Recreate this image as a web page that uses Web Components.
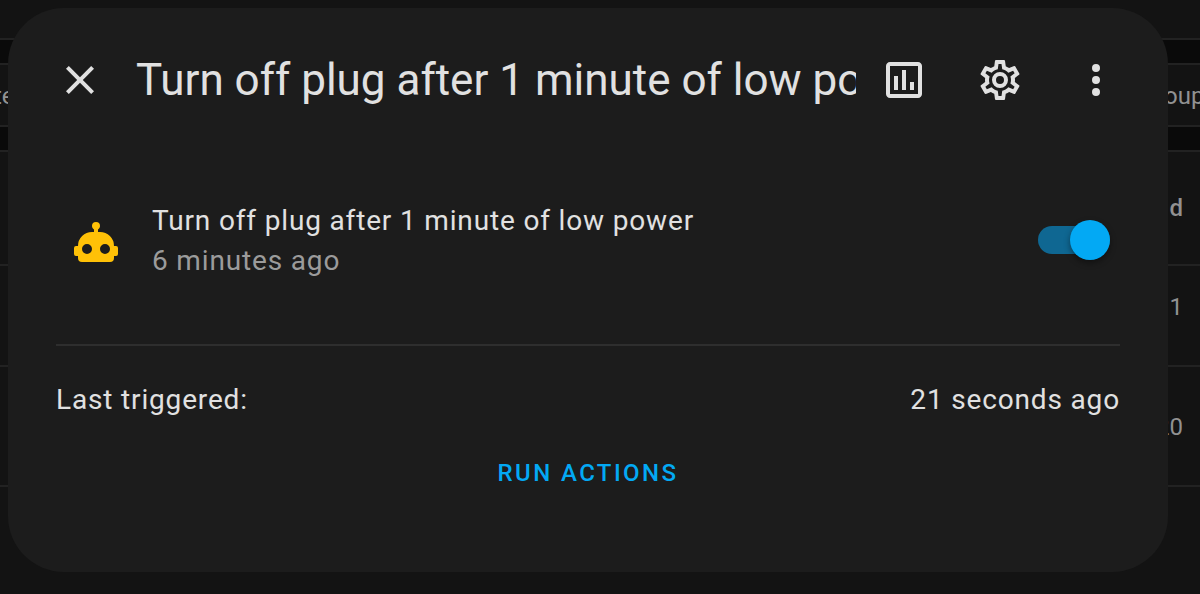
<!DOCTYPE html>
<html lang="en">
<head>
<meta charset="utf-8">
<meta name="viewport" content="width=device-width, initial-scale=1">
<title>Turn off plug after 1 minute of low power</title>
<style>
  html, body { margin: 0; min-height: 100%; background: #131313; }
  body { font-family: Roboto, "Liberation Sans", sans-serif; color: #e1e1e1; }
</style>
</head>
<body>
<automation-page>
  <automation-list slot="background"></automation-list>
  <more-info-dialog heading="Turn off plug after 1 minute of low power">
    <entity-row name="Turn off plug after 1 minute of low power" changed="6 minutes ago"></entity-row>
    <attribute-row label="Last triggered:" value="21 seconds ago"></attribute-row>
    <action-button>RUN ACTIONS</action-button>
  </more-info-dialog>
</automation-page>

<script>
const ICONS = {
  close: 'M19,6.41L17.59,5L12,10.59L6.41,5L5,6.41L10.59,12L5,17.59L6.41,19L12,13.41L17.59,19L19,17.59L13.41,12L19,6.41Z',
  chart: 'M9 17H7V10H9V17M13 17H11V7H13V17M17 17H15V13H17V17M19 19H5V5H19V19.1M19 3H5C3.9 3 3 3.9 3 5V19C3 20.1 3.9 21 5 21H19C20.1 21 21 20.1 21 19V5C21 3.9 20.1 3 19 3Z',
  cog: 'M12,8A4,4 0 0,1 16,12A4,4 0 0,1 12,16A4,4 0 0,1 8,12A4,4 0 0,1 12,8M12,10A2,2 0 0,0 10,12A2,2 0 0,0 12,14A2,2 0 0,0 14,12A2,2 0 0,0 12,10M10,22C9.75,22 9.54,21.82 9.5,21.58L9.13,18.93C8.5,18.68 7.96,18.34 7.44,17.94L4.95,18.95C4.73,19.03 4.46,18.95 4.34,18.73L2.34,15.27C2.21,15.05 2.27,14.78 2.46,14.63L4.57,12.97L4.5,12L4.57,11L2.46,9.37C2.27,9.22 2.21,8.95 2.34,8.73L4.34,5.27C4.46,5.05 4.73,4.96 4.95,5.05L7.44,6.05C7.96,5.66 8.5,5.32 9.13,5.07L9.5,2.42C9.54,2.18 9.75,2 10,2H14C14.25,2 14.46,2.18 14.5,2.42L14.87,5.07C15.5,5.32 16.04,5.66 16.56,6.05L19.05,5.05C19.27,4.96 19.54,5.05 19.66,5.27L21.66,8.73C21.79,8.95 21.73,9.22 21.54,9.37L19.43,11L19.5,12L19.43,13L21.54,14.63C21.73,14.78 21.79,15.05 21.66,15.27L19.66,18.73C19.54,18.95 19.27,19.04 19.05,18.95L16.56,17.95C16.04,18.34 15.5,18.68 14.87,18.93L14.5,21.58C14.46,21.82 14.25,22 14,22H10M11.25,4L10.88,6.61C9.68,6.86 8.62,7.5 7.85,8.39L5.44,7.35L4.69,8.65L6.8,10.2C6.4,11.37 6.4,12.64 6.8,13.8L4.68,15.36L5.43,16.66L7.86,15.62C8.63,16.5 9.68,17.14 10.87,17.38L11.24,20H12.76L13.13,17.39C14.32,17.14 15.37,16.5 16.14,15.62L18.57,16.66L19.32,15.36L17.2,13.81C17.6,12.64 17.6,11.37 17.2,10.2L19.31,8.65L18.56,7.35L16.15,8.39C15.38,7.5 14.32,6.86 13.12,6.62L12.75,4H11.25Z',
  dots: 'M12,16A2,2 0 0,1 14,18A2,2 0 0,1 12,20A2,2 0 0,1 10,18A2,2 0 0,1 12,16M12,10A2,2 0 0,1 14,12A2,2 0 0,1 12,14A2,2 0 0,1 10,12A2,2 0 0,1 12,10M12,4A2,2 0 0,1 14,6A2,2 0 0,1 12,8A2,2 0 0,1 10,6A2,2 0 0,1 12,4Z',
  robot: 'M12,2A2,2 0 0,1 14,4C14,4.74 13.6,5.39 13,5.73V7H14A7,7 0 0,1 21,14H22A1,1 0 0,1 23,15V18A1,1 0 0,1 22,19H21V20A2,2 0 0,1 19,22H5A2,2 0 0,1 3,20V19H2A1,1 0 0,1 1,18V15A1,1 0 0,1 2,14H3A7,7 0 0,1 10,7H11V5.73C10.4,5.39 10,4.74 10,4A2,2 0 0,1 12,2M7.5,13A2.5,2.5 0 0,0 5,15.5A2.5,2.5 0 0,0 7.5,18A2.5,2.5 0 0,0 10,15.5A2.5,2.5 0 0,0 7.5,13M16.5,13A2.5,2.5 0 0,0 14,15.5A2.5,2.5 0 0,0 16.5,18A2.5,2.5 0 0,0 19,15.5A2.5,2.5 0 0,0 16.5,13Z'
};

class BaseElement extends HTMLElement {
  connectedCallback() {
    if (!this.shadowRoot) this.attachShadow({ mode: 'open' }).innerHTML = this.render();
  }
}

customElements.define('svg-icon', class extends BaseElement {
  render() {
    return `<style>
      :host { display: block; width: 48px; height: 48px; }
      svg { display: block; width: 100%; height: 100%; fill: currentColor; }
    </style>
    <svg viewBox="0 0 24 24" aria-hidden="true"><path d="${ICONS[this.getAttribute('name')]}"/></svg>`;
  }
});

customElements.define('icon-button', class extends BaseElement {
  render() {
    return `<style>
      :host { display: block; flex: none; }
      button { display: block; padding: 24px; border: 0; border-radius: 50%; background: none; color: inherit; cursor: pointer; }
    </style>
    <button type="button" aria-label="${this.getAttribute('label')}"><svg-icon name="${this.getAttribute('icon')}"></svg-icon></button>`;
  }
});

/* The page stacks the dialog over the list in one grid cell. */
customElements.define('automation-page', class extends BaseElement {
  render() {
    return `<style>
      :host { display: grid; grid-template-columns: minmax(0, 1fr); min-height: 100vh; overflow: hidden; }
      slot { display: contents; }
      ::slotted(*) { grid-area: 1 / 1; }
    </style>
    <slot name="background"></slot><slot></slot>`;
  }
});

/* Dimmed list behind the dialog. */
customElements.define('automation-list', class extends BaseElement {
  render() {
    return `<style>
      :host { display: block; overflow: hidden; font-size: 24px; line-height: 32px; color: #919191; }
      div { box-sizing: border-box; border-bottom: 2px solid #222; }
      .top { height: 40px; }
      .band { height: 25px; background: #0a0a0a; }
      .tools { display: flex; justify-content: space-between; padding-top: 15px; height: 62px; }
      .start { margin-left: -6px; }
      .end { width: 36px; }
      .row { display: flex; align-items: center; justify-content: flex-end; padding-right: 17px; }
      .head { height: 114px; font-weight: 500; }
      .short { height: 101px; padding-bottom: 18px; }
      .tall { height: 120px; padding-top: 2px; }
    </style>
    <div class="top"></div>
    <div class="band"></div>
    <div class="tools"><span class="start">te</span><span class="end">oup</span></div>
    <div class="band"></div>
    <div class="row head">d</div>
    <div class="row short">1</div>
    <div class="row tall">20</div>`;
  }
});

customElements.define('more-info-dialog', class extends BaseElement {
  render() {
    return `<style>
      :host { display: block; box-sizing: border-box; align-self: start; margin: 8px 32px 22px 8px;
              padding-bottom: 63px; border-radius: 56px; background: #1c1c1c; }
      header { display: flex; align-items: center; padding: 24px 24px 0; }
      h2 { flex: 1; min-width: 0; margin: 0 0 0 8px; overflow: hidden; white-space: nowrap;
           font-size: 44px; line-height: 56px; font-weight: 400; }
      main { display: flex; flex-direction: column; padding: 71px 48px 0; }
    </style>
    <section role="dialog" aria-labelledby="title">
      <header>
        <icon-button icon="close" label="Close"></icon-button>
        <h2 id="title">${this.getAttribute('heading')}</h2>
        <icon-button icon="chart" label="History"></icon-button>
        <icon-button icon="cog" label="Settings"></icon-button>
        <icon-button icon="dots" label="Menu"></icon-button>
      </header>
      <main><slot></slot></main>
    </section>`;
  }
});

customElements.define('entity-row', class extends BaseElement {
  render() {
    return `<style>
      :host { display: flex; align-items: center; padding-bottom: 63px; border-bottom: 2px solid #2e2e2e;
              font-size: 28px; line-height: 40px; letter-spacing: 0.03em; }
      .badge { display: flex; align-items: center; justify-content: center; box-sizing: border-box;
               width: 80px; height: 80px; padding-top: 4px; color: #ffc107; }
      label { flex: 1; min-width: 0; margin-left: 16px; padding-top: 2px; }
      .name, .changed { display: block; overflow: hidden; white-space: nowrap; text-overflow: ellipsis; }
      .changed { color: #9b9b9b; }
      input { appearance: none; position: relative; flex: none; width: 72px; height: 28px; margin: 0 10px 0 0;
              border-radius: 14px; background: #0f6792; cursor: pointer; }
      input::before { content: ""; position: absolute; top: -6px; left: 0; width: 40px; height: 40px;
                      border-radius: 50%; background: #03a9f4; box-shadow: 0 3px 6px rgba(0, 0, 0, .4); }
      input:checked::before { left: 32px; }
    </style>
    <div class="badge"><svg-icon name="robot"></svg-icon></div>
    <label for="toggle"><span class="name">${this.getAttribute('name')}</span><span class="changed">${this.getAttribute('changed')}</span></label>
    <input id="toggle" type="checkbox" role="switch" checked>`;
  }
});

customElements.define('attribute-row', class extends BaseElement {
  render() {
    return `<style>
      :host { display: flex; justify-content: space-between; padding-top: 34px;
              font-size: 28px; line-height: 40px; letter-spacing: 0.03em; }
    </style>
    <span>${this.getAttribute('label')}</span><span>${this.getAttribute('value')}</span>`;
  }
});

customElements.define('action-button', class extends BaseElement {
  render() {
    return `<style>
      :host { display: flex; justify-content: center; padding-top: 17px; }
      button { padding: 0 16px; border: 0; border-radius: 8px; background: none; color: #03a9f4; cursor: pointer;
               font: 500 24px/72px Roboto, "Liberation Sans", sans-serif; letter-spacing: 0.1em; }
    </style>
    <button type="button"><slot></slot></button>`;
  }
});
</script>
</body>
</html>
